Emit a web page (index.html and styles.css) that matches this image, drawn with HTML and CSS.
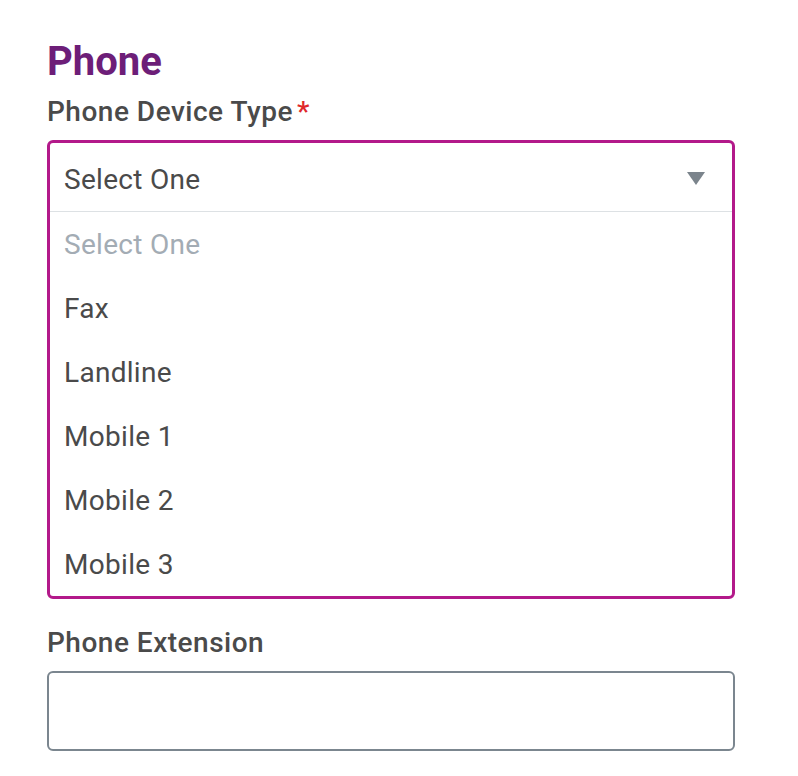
FILE: index.html
```html
<!DOCTYPE html>
<html>
<head>
<meta charset="utf-8">
<link rel="stylesheet" href="styles.css">
</head>
<body>
<div class="form">
  <h2 class="title">Phone</h2>
  <div class="label">Phone Device Type<span class="req">*</span></div>
  <div class="select">
    <div class="select-head">
      <span>Select One</span>
      <svg class="caret" width="18" height="13" viewBox="0 0 18 13"><path d="M0 0 H18 L9 13 Z" fill="#7b848c"/></svg>
    </div>
    <ul class="options">
      <li class="placeholder">Select One</li>
      <li>Fax</li>
      <li>Landline</li>
      <li>Mobile 1</li>
      <li>Mobile 2</li>
      <li>Mobile 3</li>
    </ul>
  </div>
  <div class="label label-ext">Phone Extension</div>
  <div class="input"></div>
</div>
</body>
</html>
```
FILE: styles.css
```css
html, body { margin: 0; padding: 0; background: #fff; }
* { box-sizing: border-box; }
body { font-family: Roboto, "Noto Sans", sans-serif; color: #4a4a4a; }
.form { padding: 38px 63px 0 47px; }
.title { margin: 0; font-size: 40px; font-weight: 700; color: #6d1e78; line-height: 48px; }
.label { font-size: 28px; font-weight: 500; color: #4a4a4a; line-height: 32px; margin-top: 10px; letter-spacing: 0.5px; }
.req { color: #e0282b; margin-left: 4px; }
.select { margin-top: 12px; border: 3px solid #b3198a; border-radius: 6px; }
.select-head { height: 69px; display: flex; align-items: center; justify-content: space-between; padding: 4px 27px 0 14px; border-bottom: 1px solid #dde1e4; font-size: 28px; letter-spacing: 0.3px; color: #4a4a4a; }
.caret { display: block; margin-top: -2px; }
.options { list-style: none; margin: 0; padding: 0; }
.options li { height: 64px; display: flex; align-items: center; padding-left: 14px; font-size: 28px; letter-spacing: 0.3px; color: #4a4a4a; }
.options li.placeholder { color: #a3acb4; }
.label-ext { margin-top: 28px; }
.input { margin-top: 12px; height: 80px; border: 2px solid #7b868f; border-radius: 6px; }
```
